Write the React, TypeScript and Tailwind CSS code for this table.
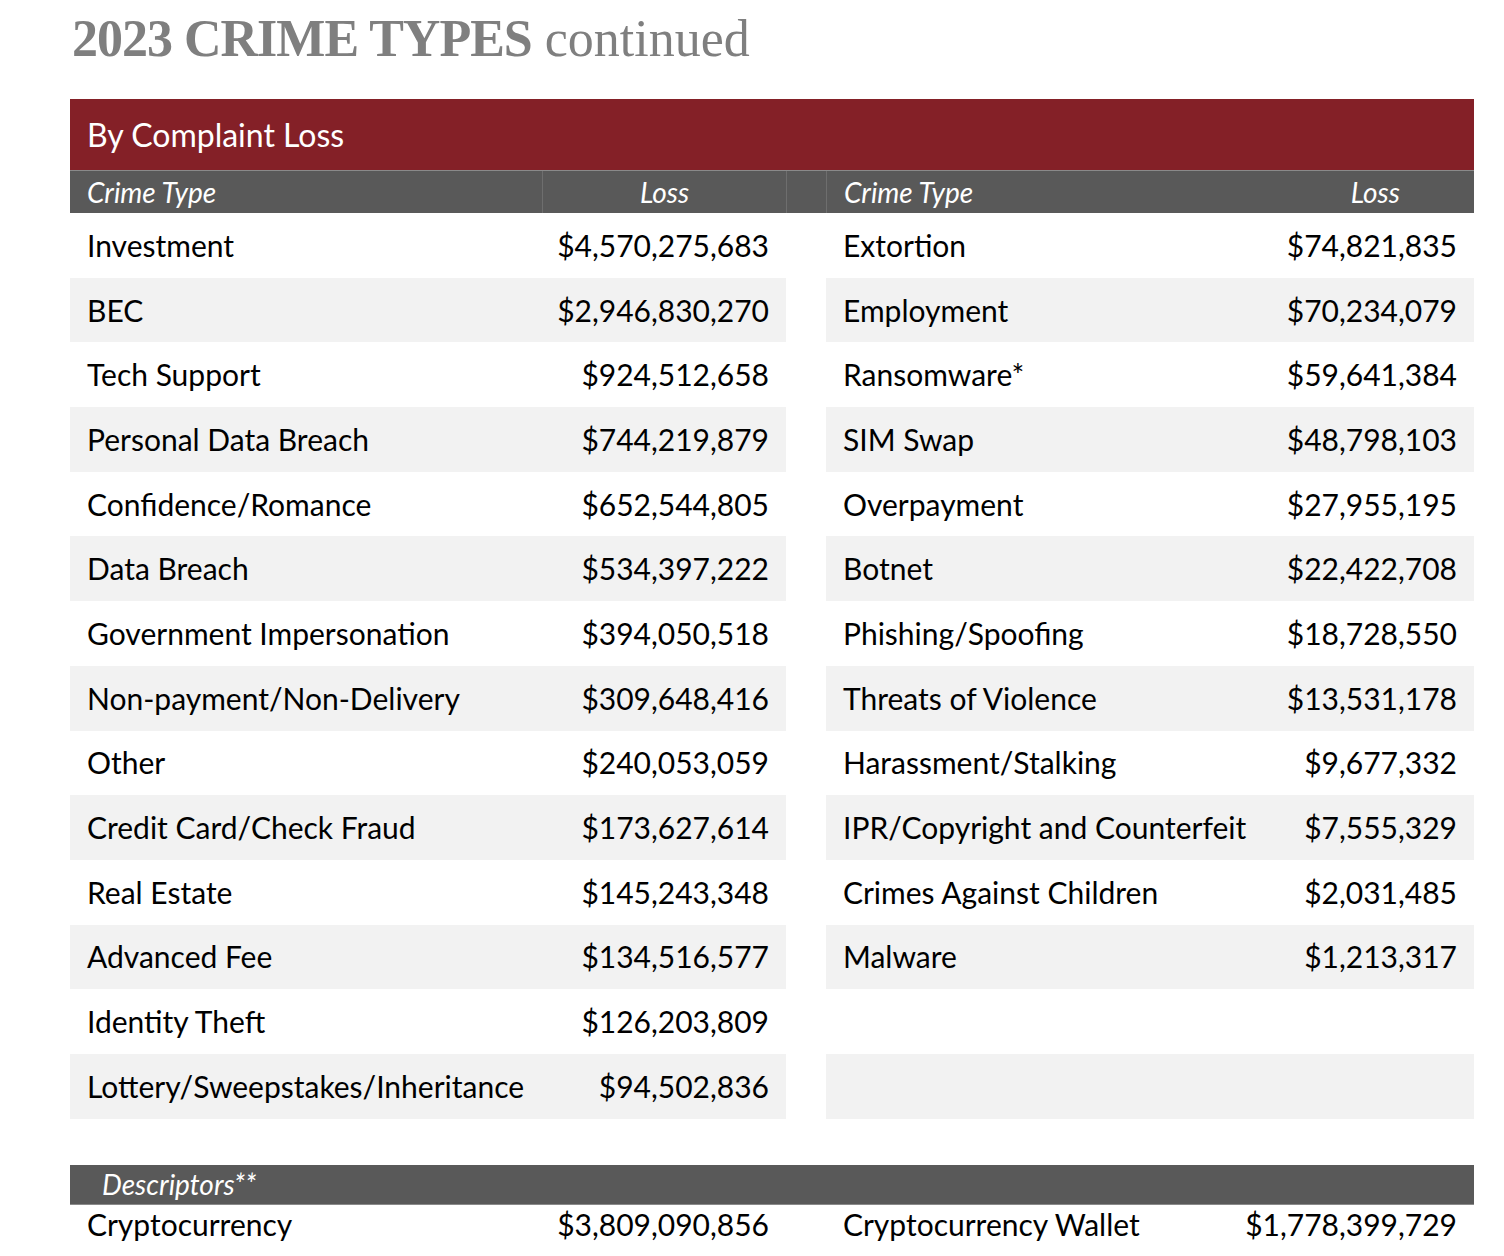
const left: [string, string][] = [
  ["Investment", "$4,570,275,683"],
  ["BEC", "$2,946,830,270"],
  ["Tech Support", "$924,512,658"],
  ["Personal Data Breach", "$744,219,879"],
  ["Confidence/Romance", "$652,544,805"],
  ["Data Breach", "$534,397,222"],
  ["Government Impersonation", "$394,050,518"],
  ["Non-payment/Non-Delivery", "$309,648,416"],
  ["Other", "$240,053,059"],
  ["Credit Card/Check Fraud", "$173,627,614"],
  ["Real Estate", "$145,243,348"],
  ["Advanced Fee", "$134,516,577"],
  ["Identity Theft", "$126,203,809"],
  ["Lottery/Sweepstakes/Inheritance", "$94,502,836"],
]

const right: [string, string][] = [
  ["Extortion", "$74,821,835"],
  ["Employment", "$70,234,079"],
  ["Ransomware*", "$59,641,384"],
  ["SIM Swap", "$48,798,103"],
  ["Overpayment", "$27,955,195"],
  ["Botnet", "$22,422,708"],
  ["Phishing/Spoofing", "$18,728,550"],
  ["Threats of Violence", "$13,531,178"],
  ["Harassment/Stalking", "$9,677,332"],
  ["IPR/Copyright and Counterfeit", "$7,555,329"],
  ["Crimes Against Children", "$2,031,485"],
  ["Malware", "$1,213,317"],
  ["", ""],
  ["", ""],
]

function Table({ rows }: { rows: [string, string][] }) {
  return (
    <div className="flex flex-col">
      {rows.map(([name, loss], i) => (
        <div
          key={i}
          className={`flex h-[64.7px] items-center justify-between px-[17px] ${i % 2 === 1 ? "bg-[#f2f2f2]" : "bg-white"}`}
        >
          <span>{name}</span>
          <span>{loss}</span>
        </div>
      ))}
    </div>
  )
}

export default function App() {
  return (
    <div className="w-[1504px] h-[1256px] overflow-hidden bg-white pl-[70px] pr-[30px] font-['Lato','Open_Sans',sans-serif] text-[30px] text-black">
      <h1 className="pt-[9px] pl-[2px] font-['Liberation_Serif',serif] text-[52px] leading-[60px] text-[#7f7f7f]">
        <span className="font-bold tracking-[-1px]">2023 CRIME TYPES</span> continued
      </h1>

      <div className="mt-[30px] flex h-[71px] items-center bg-[#842027] px-[17px] text-[32px] text-white">
        By Complaint Loss
      </div>

      <div className="grid h-[43px] grid-cols-[472px_244px_40px_648px] border-t border-[#8a8a8a] bg-[#595959] text-[28px] italic text-white">
        <div className="flex items-center px-[17px]">Crime Type</div>
        <div className="flex items-center justify-center border-l border-[#6e6e6e]">Loss</div>
        <div className="border-l border-[#6e6e6e]" />
        <div className="flex items-center justify-between border-l border-[#6e6e6e] pl-[17px] pr-[74px]">
          <span>Crime Type</span>
          <span>Loss</span>
        </div>
      </div>

      <div className="grid grid-cols-[716px_648px] gap-x-[40px]">
        <Table rows={left} />
        <Table rows={right} />
      </div>

      <div className="mt-[46px] flex h-[40px] items-center border-b border-[#8a8a8a] bg-[#595959] pl-[32px] text-[28px] italic text-white">
        Descriptors**
      </div>
      <div className="grid grid-cols-[716px_648px] gap-x-[40px]">
        <div className="flex h-[40px] items-center justify-between px-[17px]">
          <span>Cryptocurrency</span>
          <span>$3,809,090,856</span>
        </div>
        <div className="flex h-[40px] items-center justify-between px-[17px]">
          <span>Cryptocurrency Wallet</span>
          <span>$1,778,399,729</span>
        </div>
      </div>
    </div>
  )
}
